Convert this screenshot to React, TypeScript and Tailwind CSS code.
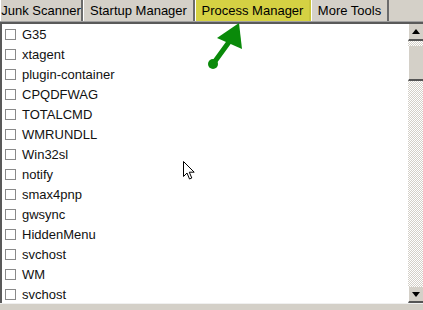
import React from "react";

const items = [
  "G35",
  "xtagent",
  "plugin-container",
  "CPQDFWAG",
  "TOTALCMD",
  "WMRUNDLL",
  "Win32sl",
  "notify",
  "smax4pnp",
  "gwsync",
  "HiddenMenu",
  "svchost",
  "WM",
  "svchost",
];

function Tab({ label, w, active }: { label: string; w: string; active?: boolean }) {
  return (
    <div
      className={`${w} h-[21px] flex items-center justify-center text-[13px] leading-none text-black border-l border-l-white border-r-2 border-r-[#6b6b6b] ${
        active ? "bg-[#d5d143] border-r-[#c9c53a] border-l-[#d5d143]" : "bg-[#d4d0c8]"
      }`}
    >
      {label}
    </div>
  );
}

export default function App() {
  return (
    <div
      className="relative w-[423px] h-[310px] bg-[#d4d0c8] overflow-hidden"
      style={{ fontFamily: '"Liberation Sans", Arial, sans-serif' }}
    >
      <div className="flex h-[21px]">
        <Tab label="Junk Scanner" w="w-[83px]" />
        <Tab label="Startup Manager" w="w-[112px]" />
        <Tab label="Process Manager" w="w-[116px]" active />
        <Tab label="More Tools" w="w-[78px]" />
      </div>
      <div className="h-[1px] bg-[#a0a0a0]" />
      <div className="h-[2px] bg-[#5a5a5a]" />
      <div className="flex h-[279px]">
        <div className="flex-1 bg-white border-l-2 border-l-[#5a5a5a]">
          {items.map((it, i) => (
            <div key={i} className="h-[20px] flex items-center">
              <div className="ml-[3px] w-[11px] h-[11px] border border-[#8a8a8a] bg-white" />
              <span className="ml-[6px] text-[13px] leading-none text-[#111]">{it}</span>
            </div>
          ))}
        </div>
        <div className="w-[15px] flex flex-col bg-[repeating-conic-gradient(#d4d0c8_0%_25%,#ffffff_0%_50%)] bg-[length:2px_2px]">
          <div className="h-[17px] bg-[#d4d0c8] border-l border-l-white border-b-2 border-b-[#555] flex items-center justify-center">
            <svg width="8" height="5" viewBox="0 0 8 5">
              <polygon points="4,0 8,5 0,5" fill="#000" />
            </svg>
          </div>
          <div className="h-[5px]" />
          <div className="h-[35px] bg-[#d4d0c8] border-l border-l-white border-b-2 border-b-[#555]" />
          <div className="flex-1" />
          <div className="h-[16px] bg-[#d4d0c8] border-l border-l-white border-b-2 border-b-[#555] flex items-center justify-center">
            <svg width="8" height="5" viewBox="0 0 8 5">
              <polygon points="0,0 8,0 4,5" fill="#000" />
            </svg>
          </div>
        </div>
      </div>
      <div className="h-[1px] bg-[#f0f0f0]" />

      {/* green arrow */}
      <svg className="absolute left-[205px] top-[20px]" width="50" height="52" viewBox="0 0 50 52">
        <line x1="8" y1="44" x2="24" y2="22" stroke="#0a8a0a" strokeWidth="5" strokeLinecap="round" />
        <polygon points="34,3 37,29 12,18" fill="#0a8a0a" />
        <circle cx="8" cy="44" r="5" fill="#0a8a0a" />
      </svg>

      {/* mouse cursor */}
      <svg className="absolute left-[183px] top-[161px]" width="13" height="20" viewBox="0 0 13 20">
        <path
          d="M0.5 0.5 L0.5 15.5 L4 12 L6.5 18 L8.8 17 L6.3 11.2 L11.2 11.2 Z"
          fill="#fff"
          stroke="#000"
          strokeWidth="1"
        />
      </svg>
    </div>
  );
}
